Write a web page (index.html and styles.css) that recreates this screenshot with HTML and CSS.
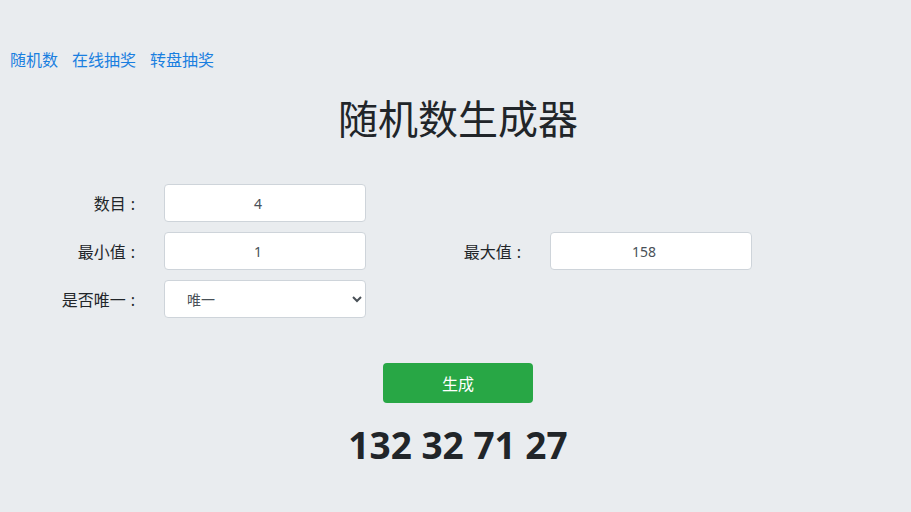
FILE: index.html
```html
<!DOCTYPE html>
<html lang="zh-CN">
<head>
<meta charset="utf-8">
<title>随机数生成器</title>
<link rel="stylesheet" href="styles.css">
</head>
<body>
<nav class="nav">
  <a href="#" class="nav-link">随机数</a>
  <a href="#" class="nav-link">在线抽奖</a>
  <a href="#" class="nav-link">转盘抽奖</a>
</nav>
<main class="main">
  <h1 class="title">随机数生成器</h1>
  <form class="form">
    <label class="label">数目<span class="colon">:</span></label>
    <input class="control" type="text" value="4">
    <span></span><span></span>
    <label class="label">最小值<span class="colon">:</span></label>
    <input class="control" type="text" value="1">
    <label class="label">最大值<span class="colon">:</span></label>
    <input class="control" type="text" value="158">
    <label class="label">是否唯一<span class="colon">:</span></label>
    <select class="control select">
      <option>唯一</option>
    </select>
  </form>
  <div class="actions">
    <button class="btn" type="button">生成</button>
  </div>
  <div class="result">132 32 71 27</div>
</main>
</body>
</html>
```

FILE: styles.css
```css
html, body {
  margin: 0;
  padding: 0;
}
body {
  background: #e9ecef;
  color: #212529;
  font-family: "Noto Sans", "Noto Sans CJK SC", sans-serif;
  font-size: 16px;
}
.nav {
  display: flex;
  gap: 14px;
  padding: 48px 10px 0;
  height: 24px;
  line-height: 24px;
}
.nav-link {
  color: #1a7fe0;
  text-decoration: none;
  font-size: 16px;
}
.main {
  margin-left: 8px;
  width: 900px;
}
.title {
  margin: 18px 0 0;
  text-align: center;
  font-size: 40px;
  font-weight: 400;
  line-height: 58px;
  color: #212529;
}
.form {
  margin-top: 36px;
  display: grid;
  grid-template-columns: 128px 202px 128px 202px;
  column-gap: 28px;
  row-gap: 10px;
  align-items: center;
}
.label {
  text-align: right;
  font-size: 16px;
  color: #212529;
}
.colon {
  margin-left: 5px;
  padding-right: 1px;
}
.control {
  box-sizing: border-box;
  height: 38px;
  width: 202px;
  border: 1px solid #ced4da;
  border-radius: 4px;
  background: #fff;
  font-family: "Noto Sans", "Noto Sans CJK SC", sans-serif;
  font-size: 14px;
  color: #495057;
  text-align: center;
  padding: 0 22px 0 8px;
}
.select {
  text-align: left;
  padding: 0 8px 0 18px;
}
.actions {
  margin-top: 45px;
  display: flex;
  justify-content: center;
}
.btn {
  width: 150px;
  height: 40px;
  border: none;
  border-radius: 4px;
  background: #28a745;
  color: #fff;
  font-family: "Noto Sans", "Noto Sans CJK SC", sans-serif;
  font-size: 16px;
}
.result {
  margin-top: 18px;
  text-align: center;
  font-size: 37px;
  font-weight: 700;
  line-height: 48px;
  color: #212529;
}
```
